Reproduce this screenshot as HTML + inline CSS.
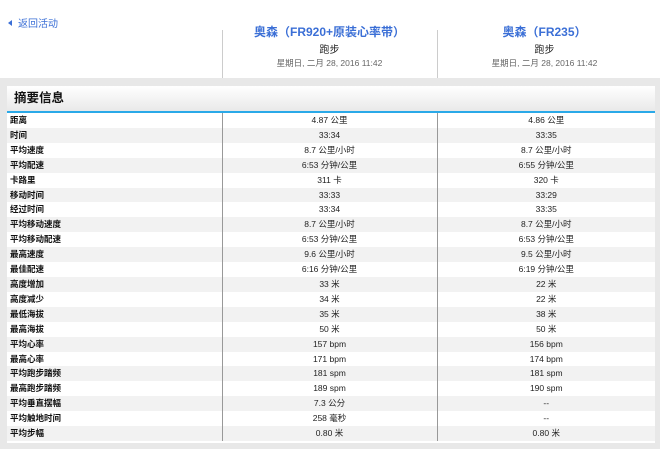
<!DOCTYPE html><html><head><meta charset="utf-8"><style>
body{margin:0;width:660px;height:449px;overflow:hidden;background:#fff;font-family:"Liberation Sans","Noto Sans CJK SC",sans-serif;position:relative}
.back{position:absolute;left:8px;top:15px;font-size:10px;color:#3b6fd6}
.back:before{content:"";display:inline-block;border:3px solid transparent;border-right:4px solid #3b6fd6;border-left:0;margin-right:6px;vertical-align:1px}
.hd{position:absolute;top:0;height:78px;text-align:center}
.hd .t{position:absolute;top:23px;width:100%;font-size:12px;font-weight:bold;color:#3b6fd6}
.hd .s{position:absolute;top:41px;width:100%;font-size:10px;color:#222}
.hd .d{position:absolute;top:57px;width:100%;font-size:8.5px;color:#666}
.vl{position:absolute;top:30px;height:48px;width:1px;background:#ccc}
.bg{position:absolute;left:0;top:78px;width:660px;height:371px;background:#e8e8e8}
.panel{position:absolute;left:7px;top:86px;width:648px;height:357px;background:#fff}
.ph{height:25px;background:linear-gradient(#fff,#e9e9e9);font-size:12.5px;font-weight:bold;color:#111;line-height:25px;padding-left:7px;border-bottom:2px solid #2aa9e8}
table{border-collapse:collapse;width:648px;font-size:8.5px;table-layout:fixed}
td{height:14.9px;padding:0;line-height:14.9px}
tr:nth-child(even) td{background:#f2f2f2}
td.l{padding-left:3px;font-weight:bold;color:#111}
td.v{text-align:center;border-left:1px solid #999;color:#222}
</style></head><body>
<div class="back">返回活动</div>
<div class="vl" style="left:222px"></div><div class="vl" style="left:437px"></div>
<div class="hd" style="left:222px;width:215px"><div class="t">奥森（FR920+原装心率带）</div><div class="s">跑步</div><div class="d">星期日, 二月 28, 2016 11:42</div></div>
<div class="hd" style="left:437px;width:215px"><div class="t">奥森（FR235）</div><div class="s">跑步</div><div class="d">星期日, 二月 28, 2016 11:42</div></div>
<div class="bg"></div>
<div class="panel"><div class="ph">摘要信息</div>
<table>
<colgroup><col style="width:215px"><col style="width:215px"><col style="width:218px"></colgroup>
<tr><td class="l">距离</td><td class="v">4.87 公里</td><td class="v">4.86 公里</td></tr>
<tr><td class="l">时间</td><td class="v">33:34</td><td class="v">33:35</td></tr>
<tr><td class="l">平均速度</td><td class="v">8.7 公里/小时</td><td class="v">8.7 公里/小时</td></tr>
<tr><td class="l">平均配速</td><td class="v">6:53 分钟/公里</td><td class="v">6:55 分钟/公里</td></tr>
<tr><td class="l">卡路里</td><td class="v">311 卡</td><td class="v">320 卡</td></tr>
<tr><td class="l">移动时间</td><td class="v">33:33</td><td class="v">33:29</td></tr>
<tr><td class="l">经过时间</td><td class="v">33:34</td><td class="v">33:35</td></tr>
<tr><td class="l">平均移动速度</td><td class="v">8.7 公里/小时</td><td class="v">8.7 公里/小时</td></tr>
<tr><td class="l">平均移动配速</td><td class="v">6:53 分钟/公里</td><td class="v">6:53 分钟/公里</td></tr>
<tr><td class="l">最高速度</td><td class="v">9.6 公里/小时</td><td class="v">9.5 公里/小时</td></tr>
<tr><td class="l">最佳配速</td><td class="v">6:16 分钟/公里</td><td class="v">6:19 分钟/公里</td></tr>
<tr><td class="l">高度增加</td><td class="v">33 米</td><td class="v">22 米</td></tr>
<tr><td class="l">高度减少</td><td class="v">34 米</td><td class="v">22 米</td></tr>
<tr><td class="l">最低海拔</td><td class="v">35 米</td><td class="v">38 米</td></tr>
<tr><td class="l">最高海拔</td><td class="v">50 米</td><td class="v">50 米</td></tr>
<tr><td class="l">平均心率</td><td class="v">157 bpm</td><td class="v">156 bpm</td></tr>
<tr><td class="l">最高心率</td><td class="v">171 bpm</td><td class="v">174 bpm</td></tr>
<tr><td class="l">平均跑步踏频</td><td class="v">181 spm</td><td class="v">181 spm</td></tr>
<tr><td class="l">最高跑步踏频</td><td class="v">189 spm</td><td class="v">190 spm</td></tr>
<tr><td class="l">平均垂直摆幅</td><td class="v">7.3 公分</td><td class="v">--</td></tr>
<tr><td class="l">平均触地时间</td><td class="v">258 毫秒</td><td class="v">--</td></tr>
<tr><td class="l">平均步幅</td><td class="v">0.80 米</td><td class="v">0.80 米</td></tr>
</table></div>
</body></html>
